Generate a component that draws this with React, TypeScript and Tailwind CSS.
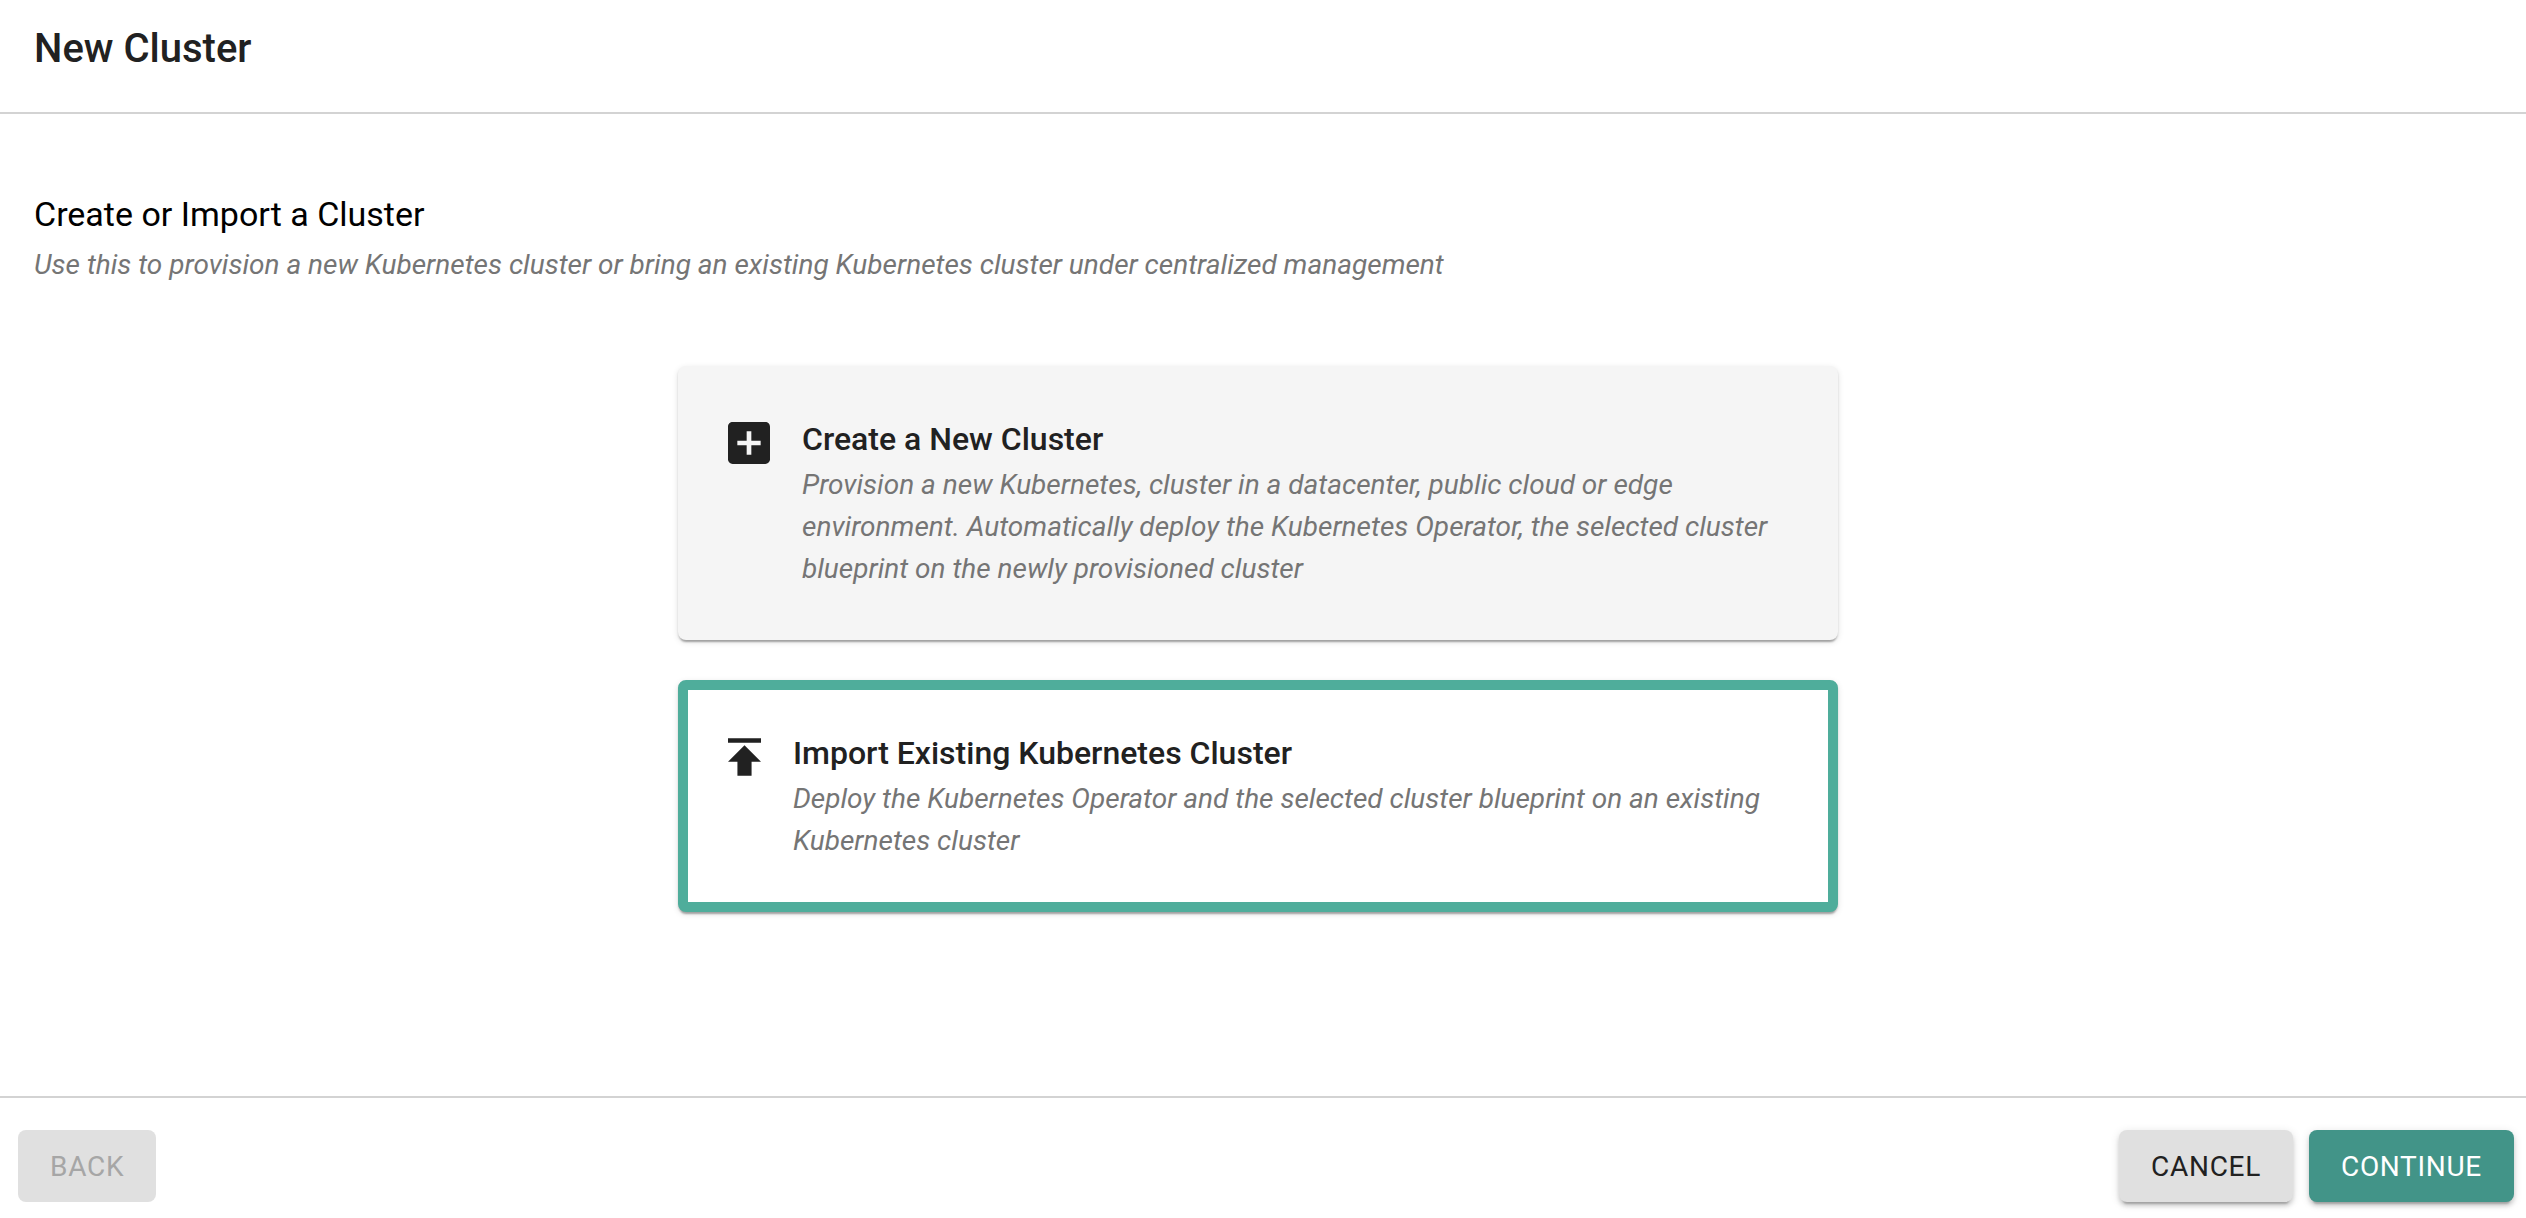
import React, { useState } from 'react';
import clsx from 'clsx';

const AddBoxIcon = () => (
  <svg viewBox="3 3 18 18" fill="currentColor" aria-hidden="true" className="mt-[6px] h-[42px] w-[42px] shrink-0">
    <path d="M19 3H5c-1.11 0-2 .9-2 2v14c0 1.1.89 2 2 2h14c1.1 0 2-.9 2-2V5c0-1.1-.9-2-2-2zm-2 10h-4v4h-2v-4H7v-2h4V7h2v4h4v2z" />
  </svg>
);

const PublishIcon = () => (
  <svg viewBox="5 4 14 16" fill="currentColor" aria-hidden="true" className="mt-2 h-[38px] w-[33px] shrink-0">
    <path d="M5 4v2h14V4H5zm0 10h4v6h6v-6h4l-7-7-7 7z" />
  </svg>
);

const options = [
  {
    id: 'create',
    title: 'Create a New Cluster',
    description:
      'Provision a new Kubernetes, cluster in a datacenter, public cloud or edge environment. Automatically deploy the Kubernetes Operator, the selected cluster blueprint on the newly provisioned cluster',
    icon: <AddBoxIcon />,
  },
  {
    id: 'import',
    title: 'Import Existing Kubernetes Cluster',
    description: 'Deploy the Kubernetes Operator and the selected cluster blueprint on an existing Kubernetes cluster',
    icon: <PublishIcon />,
  },
];

const buttonBase = 'h-[72px] rounded-lg px-8 pt-0.5 text-[28px] leading-[48px] tracking-wide uppercase';
const raised = 'shadow-[0_6px_2px_-4px_rgba(0,0,0,0.2),0_4px_4px_0_rgba(0,0,0,0.14),0_2px_10px_0_rgba(0,0,0,0.12)]';

const App: React.FC = () => {
  const [selected, setSelected] = useState<string>('import');

  return (
    <div className="flex min-h-screen flex-col bg-white font-['Roboto',sans-serif] text-[#212121]">
      <header className="border-b-2 border-[#d3d3d3] px-[34px] pt-5 pb-8">
        <h1 className="text-[40px] leading-[58px] font-medium pb-[2px]">New Cluster</h1>
      </header>

      <main className="pt-[75px] pr-[44px] pb-20 pl-[34px]">
        <h2 className="text-[34px] leading-[51px] text-black">Create or Import a Cluster</h2>
        <p className="mt-1 text-[28px] leading-[42px] text-[#757575] italic">
          Use this to provision a new Kubernetes cluster or bring an existing Kubernetes cluster under centralized
          management
        </p>

        <div className="mx-auto mt-20 flex w-full max-w-[1160px] flex-col gap-10">
          {options.map((option) => (
            <button
              key={option.id}
              type="button"
              aria-pressed={selected === option.id}
              onClick={() => setSelected(option.id)}
              className={clsx(
                'flex w-full items-start gap-8 rounded-lg text-left',
                'shadow-[0_4px_2px_-2px_rgba(0,0,0,0.2),0_2px_2px_0_rgba(0,0,0,0.14),0_2px_6px_0_rgba(0,0,0,0.12)]',
                selected === option.id ? 'border-10 border-[#4fad9b] bg-white p-10' : 'bg-[#f5f5f5] p-[50px]'
              )}
            >
              {option.icon}
              <span className="flex flex-col gap-[2px]">
                <span className="text-[32px] leading-[46px] font-medium">{option.title}</span>
                <span className="text-[28px] leading-[42px] text-[#757575] italic">{option.description}</span>
              </span>
            </button>
          ))}
        </div>
      </main>

      <footer className="mt-auto flex items-center justify-between border-t-2 border-[#d3d3d3] pt-8 pr-3 pb-4 pl-[18px]">
        <button type="button" disabled className={clsx(buttonBase, 'bg-[#e0e0e0] text-[#a6a6a6]')}>
          Back
        </button>
        <div className="flex gap-4">
          <button type="button" className={clsx(buttonBase, raised, 'bg-[#e0e0e0]')}>
            Cancel
          </button>
          <button type="button" className={clsx(buttonBase, raised, 'bg-[#429488] text-white')}>
            Continue
          </button>
        </div>
      </footer>
    </div>
  );
};

export default App;
